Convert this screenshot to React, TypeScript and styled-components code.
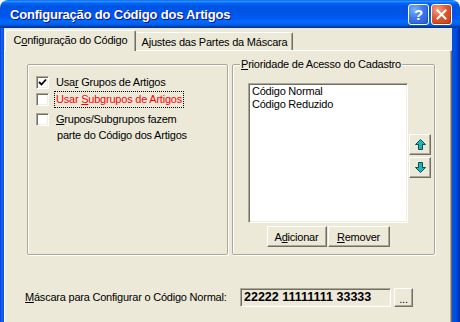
import React from "react";
import styled, { createGlobalStyle } from "styled-components";

const GlobalStyle = createGlobalStyle`
  html, body { margin: 0; padding: 0; background: #ffffff; }
  body {
    width: 460px; height: 322px; overflow: hidden;
    font-family: "Liberation Sans", Arial, sans-serif;
    font-size: 11px; color: #000;
    letter-spacing: -0.22px;
  }
  * { box-sizing: border-box; }
`;

const Window = styled.div`
  width: 460px;
  height: 322px;
  display: flex;
  flex-direction: column;
  overflow: hidden;
`;

const TitleBar = styled.div`
  height: 28px;
  flex-shrink: 0;
  display: flex;
  align-items: center;
  padding: 0 8px 0 10px;
  border-radius: 8px 8px 0 0;
  background: linear-gradient(180deg, #0058ee 0%, #3593ff 4%, #288eff 6%, #127dff 8%, #036ffc 10%, #0262ee 14%, #0057e5 20%, #0054e3 24%, #0055eb 56%, #005bf5 66%, #026afe 76%, #0062ef 86%, #0052d6 92%, #0040ab 94%, #003092 100%);
`;

const TitleText = styled.div`
  flex: 1;
  color: #fff;
  font-family: "Liberation Sans", Arial, sans-serif;
  font-weight: bold;
  font-size: 13px;
  letter-spacing: -0.2px;
  text-shadow: 1px 1px 0 #0f1089;
  padding-top: 1px;
`;

const CaptionButtons = styled.div`
  display: flex;
  gap: 2px;
`;

const CaptionButton = styled.div<{ $kind: "help" | "close" }>`
  width: 21px;
  height: 21px;
  border: 1px solid #fff;
  border-radius: 3px;
  display: flex;
  align-items: center;
  justify-content: center;
  color: #fff;
  font-weight: bold;
  font-size: 15px;
  letter-spacing: 0;
  font-family: "Liberation Sans", Arial, sans-serif;
  background: ${(p) =>
    p.$kind === "help"
      ? "radial-gradient(circle at 30% 25%, #7fb0ff 0%, #3b78ef 45%, #2157d6 100%)"
      : "radial-gradient(circle at 30% 25%, #f3a28a 0%, #e0572f 45%, #c53a14 100%)"};
  box-shadow: inset -1px -1px 0 rgba(0, 0, 0, 0.15);
`;

const Body = styled.div`
  flex: 1;
  display: flex;
  min-height: 0;
`;

const FrameSide = styled.div<{ $w: number; $right?: boolean }>`
  width: ${(p) => p.$w}px;
  flex-shrink: 0;
  background: ${(p) =>
    p.$right
      ? "linear-gradient(90deg, #0055e5 0%, #0050e0 40%, #003fc8 75%, #00249a 100%)"
      : "linear-gradient(90deg, #0831d9 0%, #1764ee 35%, #0055e5 100%)"};
`;

const Client = styled.div`
  flex: 1;
  background: #ece9d8;
  display: flex;
  flex-direction: column;
  padding-top: 2px;
  min-width: 0;
`;

const TabStrip = styled.div`
  height: 20px;
  display: flex;
  align-items: flex-end;
  padding-left: 1px;
  position: relative;
  z-index: 1;
`;

const Tab = styled.div<{ $active?: boolean; $w: number }>`
  width: ${(p) => p.$w}px;
  height: ${(p) => (p.$active ? 21 : 18)}px;
  margin-bottom: ${(p) => (p.$active ? -1 : 0)}px;
  background: #ece9d8;
  border-top: 1px solid #fff;
  border-left: 1px solid ${(p) => (p.$active ? "#fff" : "transparent")};
  border-right: 1px solid #716f64;
  box-shadow: inset -1px 0 0 #aca899;
  border-radius: 2px 2px 0 0;
  display: flex;
  align-items: center;
  justify-content: center;
  padding-bottom: ${(p) => (p.$active ? 2 : 0)}px;
  white-space: nowrap;
`;

const TabPanel = styled.div`
  flex: 1;
  border-top: 1px solid #fff;
  border-left: 1px solid #fff;
  border-right: 1px solid #716f64;
  box-shadow: inset -1px 0 0 #aca899;
  display: flex;
  flex-direction: column;
  padding: 13px 0 0 22px;
`;

const GroupRow = styled.div`
  display: flex;
  gap: 4px;
  height: 191px;
`;

const GroupBox = styled.div<{ $w: number }>`
  position: relative;
  width: ${(p) => p.$w}px;
  border: 1px solid #aca899;
  box-shadow: 1px 1px 0 #fff, inset 1px 1px 0 #fff;
  border-radius: 2px;
`;

const GroupLegend = styled.div`
  position: absolute;
  top: -7px;
  left: 7px;
  padding: 0 1px;
  background: #ece9d8;
  line-height: 13px;
  white-space: nowrap;
`;

const CheckList = styled.div`
  display: flex;
  flex-direction: column;
  padding: 9px 0 0 8px;
`;

const CheckRow = styled.div<{ $gapTop?: number }>`
  display: flex;
  align-items: flex-start;
  column-gap: 7px;
  margin-top: ${(p) => p.$gapTop ?? 0}px;
`;

const CheckBox = styled.div`
  width: 13px;
  height: 13px;
  flex-shrink: 0;
  margin-top: 2px;
  background: #fff;
  border: 1px solid;
  border-color: #aca899 #fff #fff #aca899;
  box-shadow: inset 1px 1px 0 #716f64, inset -1px -1px 0 #f1efe2;
  display: flex;
  align-items: center;
  justify-content: center;
`;

const CheckText = styled.div<{ $red?: boolean; $focus?: boolean }>`
  line-height: ${(p) => (p.$focus ? 13 : 17)}px;
  color: ${(p) => (p.$red ? "#ff0000" : "#000")};
  white-space: nowrap;
  ${(p) =>
    p.$focus
      ? `outline: 1px dotted #000; outline-offset: 1px; margin-top: 2px; margin-bottom: 2px;`
      : ""}
`;

const MultiText = styled.div`
  line-height: 16px;
  white-space: nowrap;
`;

const Indented = styled.div`
  padding-left: 1px;
`;

const ListArea = styled.div`
  display: grid;
  grid-template-columns: 160px 22px;
  grid-template-rows: 140px auto;
  column-gap: 1px;
  row-gap: 3px;
  padding: 18px 0 0 15px;
`;

const ListBox = styled.div`
  background: #fff;
  border: 1px solid;
  border-color: #aca899 #fff #fff #aca899;
  box-shadow: inset 1px 1px 0 #716f64, inset -1px -1px 0 #f1efe2;
  padding: 1px 2px;
`;

const ListItem = styled.div`
  line-height: 13px;
  padding-left: 1px;
  white-space: nowrap;
`;

const ArrowColumn = styled.div`
  display: flex;
  flex-direction: column;
  gap: 2px;
  padding-top: 51px;
`;

const ClassicButton = styled.div<{ $w: number; $h: number }>`
  width: ${(p) => p.$w}px;
  height: ${(p) => p.$h}px;
  background: #ece9d8;
  border: 1px solid;
  border-color: #fff #716f64 #716f64 #fff;
  box-shadow: inset -1px -1px 0 #aca899;
  display: flex;
  align-items: center;
  justify-content: center;
  white-space: nowrap;
  flex-shrink: 0;
`;

const ButtonRow = styled.div`
  display: flex;
  justify-content: center;
  gap: 1px;
`;

const BottomRow = styled.div`
  display: flex;
  align-items: center;
  margin: 33px 0 0 -2px;
`;

const FieldLabel = styled.div`
  width: 215px;
  line-height: 19px;
  white-space: nowrap;
`;

const MaskBox = styled.div`
  width: 151px;
  height: 19px;
  border: 1px solid;
  border-color: #aca899 #fff #fff #aca899;
  box-shadow: inset 1px 1px 0 #716f64, inset -1px -1px 0 #f1efe2;
  background: #ece9d8;
  font-weight: bold;
  font-size: 12.5px;
  letter-spacing: 0;
  line-height: 16px;
  padding-left: 3px;
  white-space: nowrap;
`;

const DotsButton = styled(ClassicButton)`
  margin-left: 3px;
  align-items: flex-end;
  padding-bottom: 3px;
  line-height: 8px;
`;

const Arrow = ({ down }: { down?: boolean }) => (
  <svg width="11" height="11" viewBox="0 0 11 11" style={down ? { transform: "rotate(180deg)" } : undefined}>
    <path d="M5.5 0.5 L10.5 5.5 L7.5 5.5 L7.5 10.5 L3.5 10.5 L3.5 5.5 L0.5 5.5 Z" fill="#22b4b4" stroke="#0b4f55" strokeWidth="1" />
  </svg>
);

const Check = () => (
  <svg width="9" height="9" viewBox="0 0 9 9">
    <polyline points="1,4 3.5,6.5 8,1.5" fill="none" stroke="#000" strokeWidth="1.8" />
  </svg>
);

const CloseGlyph = () => (
  <svg width="11" height="11" viewBox="0 0 11 11">
    <path d="M1.5 1.5 L9.5 9.5 M9.5 1.5 L1.5 9.5" stroke="#fff" strokeWidth="2" strokeLinecap="square" />
  </svg>
);

export default function App() {
  return (
    <>
      <GlobalStyle />
      <Window>
        <TitleBar>
          <TitleText>Configuração do Código dos Artigos</TitleText>
          <CaptionButtons>
            <CaptionButton $kind="help">?</CaptionButton>
            <CaptionButton $kind="close">
              <CloseGlyph />
            </CaptionButton>
          </CaptionButtons>
        </TitleBar>
        <Body>
          <FrameSide $w={4} />
          <Client>
            <TabStrip>
              <Tab $active $w={131}>
                C<u>o</u>nfiguração do Código
              </Tab>
              <Tab $w={157}>
                A<u>j</u>ustes das Partes da Máscara
              </Tab>
            </TabStrip>
            <TabPanel>
              <GroupRow>
                <GroupBox $w={201}>
                  <CheckList>
                    <CheckRow>
                      <CheckBox>
                        <Check />
                      </CheckBox>
                      <CheckText>
                        Usa<u>r</u> Grupos de Artigos
                      </CheckText>
                    </CheckRow>
                    <CheckRow>
                      <CheckBox />
                      <CheckText $red $focus>
                        Usar <u>S</u>ubgrupos de Artigos
                      </CheckText>
                    </CheckRow>
                    <CheckRow $gapTop={3}>
                      <CheckBox />
                      <MultiText>
                        <div>
                          <u>G</u>rupos/Subgrupos fazem
                        </div>
                        <Indented>parte do Código dos Artigos</Indented>
                      </MultiText>
                    </CheckRow>
                  </CheckList>
                </GroupBox>
                <GroupBox $w={203}>
                  <GroupLegend>
                    <u>P</u>rioridade de Acesso do Cadastro
                  </GroupLegend>
                  <ListArea>
                    <ListBox>
                      <ListItem>Código Normal</ListItem>
                      <ListItem>Código Reduzido</ListItem>
                    </ListBox>
                    <ArrowColumn>
                      <ClassicButton $w={22} $h={21}>
                        <Arrow />
                      </ClassicButton>
                      <ClassicButton $w={22} $h={21}>
                        <Arrow down />
                      </ClassicButton>
                    </ArrowColumn>
                    <ButtonRow>
                      <ClassicButton $w={60} $h={21}>
                        A<u>d</u>icionar
                      </ClassicButton>
                      <ClassicButton $w={62} $h={21}>
                        <u>R</u>emover
                      </ClassicButton>
                    </ButtonRow>
                  </ListArea>
                </GroupBox>
              </GroupRow>
              <BottomRow>
                <FieldLabel>
                  <u>M</u>áscara para Configurar o Código Normal:
                </FieldLabel>
                <MaskBox>22222 11111111 33333</MaskBox>
                <DotsButton $w={19} $h={19}>...</DotsButton>
              </BottomRow>
            </TabPanel>
          </Client>
          <FrameSide $w={8} $right />
        </Body>
      </Window>
    </>
  );
}
